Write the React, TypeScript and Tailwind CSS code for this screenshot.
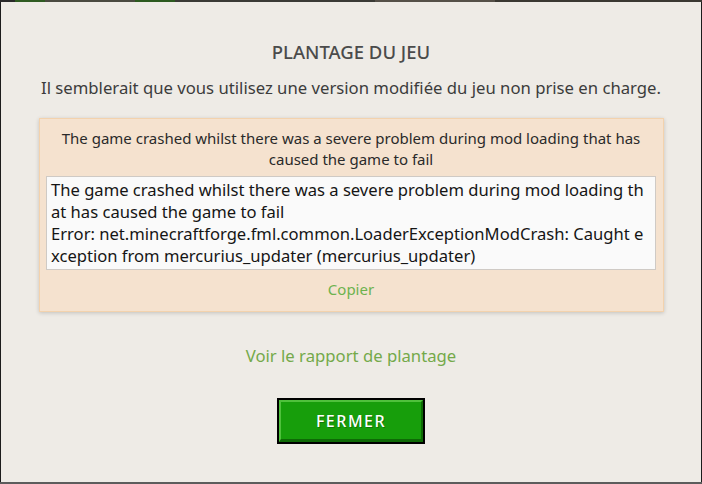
export default function App() {
  const font = { fontFamily: '"Noto Sans", "Open Sans", sans-serif' };
  return (
    <div className="w-[702px] h-[484px] bg-[#1c1c1c] flex flex-col" style={font}>
      <div className="h-[2px] flex">
        <div className="w-[15px] bg-[#2a2a2a]" />
        <div className="w-[30px] bg-[#2f5b22]" />
        <div className="w-[90px] bg-[#4a4a40]" />
        <div className="w-[40px] bg-[#2c5a1f]" />
        <div className="w-[200px] bg-[#3a3a35]" />
        <div className="w-[120px] bg-[#555048]" />
        <div className="flex-1 bg-[#3a3832]" />
      </div>
      <div className="flex-1 mx-[1px] bg-[#eeebe6] flex flex-col items-center">
        <h1 className="mt-[38px] text-[18.5px] leading-[24px] font-medium text-[#4b4b4b]">
          PLANTAGE DU JEU
        </h1>
        <p className="mt-[12px] text-[16.7px] leading-[24px] text-[#3c3c3c] whitespace-nowrap">
          Il semblerait que vous utilisez une version modifiée du jeu non prise en charge.
        </p>
        <div className="mt-[18px] w-[625px] h-[194px] bg-[#f5e2cf] border border-[#f3d2ad] shadow-[0_1px_4px_rgba(0,0,0,0.18)] flex flex-col items-center">
          <p className="mt-[9px] w-[600px] text-center text-[15px] leading-[21px] text-[#2a2a2a]">
            The game crashed whilst there was a severe problem during mod loading that has caused the game to fail
          </p>
          <div className="mt-[6px] w-[610px] h-[94px] bg-[#fafafa] border border-[#cfcac5] pl-[4px] pt-[2px] text-[16.6px] leading-[22px] text-[#151515] whitespace-pre overflow-hidden">
            <div>The game crashed whilst there was a severe problem during mod loading th</div>
            <div>at has caused the game to fail</div>
            <div>Error: net.minecraftforge.fml.common.LoaderExceptionModCrash: Caught e</div>
            <div>xception from mercurius_updater (mercurius_updater)</div>
          </div>
          <span className="mt-[9px] text-[15px] leading-[20px] text-[#6db24e]">Copier</span>
        </div>
        <a className="mt-[33px] text-[16.7px] leading-[22px] text-[#74a94a]">
          Voir le rapport de plantage
        </a>
        <button className="mt-[31px] w-[148px] h-[46px] bg-black p-[2px]">
          <div className="w-full h-full bg-[#179e0b] border-t-2 border-l-2 border-[#4fc13c] border-b-[3px] border-r-2 border-b-[#0e6a06] border-r-[#0e6a06] flex items-center justify-center">
            <span className="text-[16px] font-medium tracking-[1.5px] text-white [text-shadow:1px_1px_0_rgba(0,0,0,0.25)]">
              FERMER
            </span>
          </div>
        </button>
      </div>
      <div className="h-[2px] bg-[#5c5c5c]" />
    </div>
  );
}
